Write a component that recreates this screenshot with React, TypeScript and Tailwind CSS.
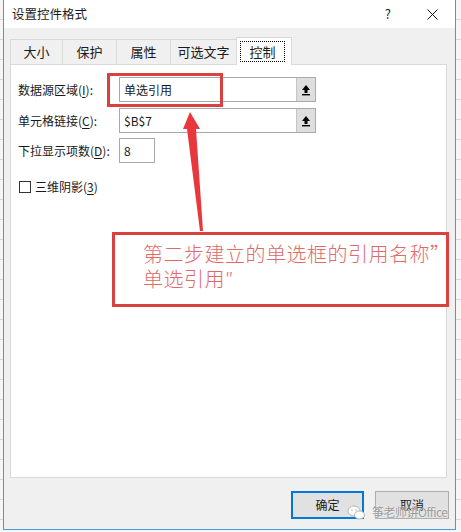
import React from "react";

const tabs = [
    { label: "大小", w: "w-[52px]" },
    { label: "保护", w: "w-[54px]" },
    { label: "属性", w: "w-[54px]" },
    { label: "可选文字", w: "w-[66px]" },
];

function PickerIcon() {
    return (
        <svg width="10" height="12" viewBox="0 0 10 12">
            <path d="M5 1 L1 6 H3.5 V9 H6.5 V6 H9 Z" fill="#000" />
            <rect x="1" y="10" width="8" height="1.4" fill="#000" />
        </svg>
    );
}

function RefInput({ value }: { value: string }) {
    return (
        <div className="flex w-[197px] h-[25px] border border-[#a9a9a9] bg-white">
            <div className="flex-1 flex items-center pl-[4px]">{value}</div>
            <div className="w-[19px] border-l border-[#c4c4c4] bg-[#dedede] flex items-center justify-center">
                <PickerIcon />
            </div>
        </div>
    );
}

function Label({ text, hot }: { text: string; hot: string }) {
    return (
        <span className="w-[101px] shrink-0">
            {text}(<span className="underline underline-offset-2">{hot}</span>):
        </span>
    );
}

export default function App() {
    return (
        <div className="relative w-[461px] h-[532px] overflow-hidden bg-[repeating-linear-gradient(to_bottom,#f6f6f6_0px,#f6f6f6_19px,#d8d8d8_19px,#d8d8d8_20px)] font-['Noto_Sans_CJK_SC',sans-serif] text-[12px] text-[#1a1a1a]">
            <div className="flex h-[532px]">
                <div className="w-[3px]" />
                {/* Dialog */}
                <div className="w-[453px] h-[530px] flex flex-col border-x border-b border-[#4a9ad6]">
                    {/* Title bar */}
                    <div className="h-[28px] bg-white flex items-center pl-[8px] shrink-0">
                        <span className="text-[12.5px]">设置控件格式</span>
                        <span className="ml-auto mr-[36px] text-[13px]">?</span>
                        <svg width="11" height="11" viewBox="0 0 11 11" className="mr-[17px]">
                            <path d="M0.5 0.5 L10.5 10.5 M10.5 0.5 L0.5 10.5" stroke="#111" strokeWidth="1" />
                        </svg>
                    </div>

                    <div className="flex-1 bg-[#f0f0f0] flex flex-col">
                        {/* Tabs */}
                        <div className="flex items-end pl-[6px] pt-[9px]">
                            {tabs.map((t) => (
                                <div
                                    key={t.label}
                                    className={`${t.w} h-[25px] border-l border-t border-[#d9d9d9] flex items-center justify-center text-[13px]`}
                                >
                                    {t.label}
                                </div>
                            ))}
                            <div className="relative z-10 -mb-px w-[56px] h-[28px] bg-white border-x border-t border-[#d9d9d9] pt-[3px] pl-[3px]">
                                <div className="w-[45px] h-[21px] border border-dotted border-black flex items-center justify-center text-[13px]">
                                    控制
                                </div>
                            </div>
                        </div>

                        {/* Panel */}
                        <div className="ml-[6px] w-[437px] h-[414px] bg-white border border-[#d9d9d9] pl-[7px] pt-[12px]">
                            <div className="flex items-center h-[25px]">
                                <Label text="数据源区域" hot="I" />
                                <RefInput value="单选引用" />
                            </div>
                            <div className="flex items-center h-[25px] mt-[6px]">
                                <Label text="单元格链接" hot="C" />
                                <RefInput value="$B$7" />
                            </div>
                            <div className="flex items-center h-[25px] mt-[5px]">
                                <Label text="下拉显示项数" hot="D" />
                                <div className="w-[36px] h-[25px] border border-[#a9a9a9] flex items-center pl-[4px]">8</div>
                            </div>
                            <div className="flex items-center mt-[15px] ml-[1px]">
                                <div className="w-[12px] h-[12px] border border-[#333] bg-white" />
                                <span className="ml-[4px]">
                                    三维阴影(<span className="underline underline-offset-2">3</span>)
                                </span>
                            </div>
                        </div>

                        {/* Buttons */}
                        <div className="flex justify-end gap-[11px] pr-[6px] mt-[13px]">
                            <button className="w-[73px] h-[28px] border-2 border-[#0078d7] bg-[#e1e1e1]">确定</button>
                            <button className="w-[74px] h-[28px] border border-[#adadad] bg-[#e1e1e1]">取消</button>
                        </div>
                    </div>
                </div>
            </div>

            {/* Annotation: highlight */}
            <div className="absolute left-[107px] top-[73px] w-[116px] h-[34px] border-[3px] border-[#d94141]" />

            {/* Annotation: arrow */}
            <svg className="absolute left-0 top-0" width="461" height="532">
                <polygon points="190,112 200,129 196,129 203,231 200,231 187,129 183,129" fill="#e8383d" />
            </svg>

            {/* Annotation: callout */}
            <div className="absolute left-[112px] top-[232px] w-[337px] h-[75px] border-[3px] border-[#d94141] bg-white pl-[28px] pt-[6px] text-[20px] leading-[25px] tracking-[0.5px] font-light text-[#e06a6a] whitespace-nowrap">
                <div>第二步建立的单选框的引用名称”</div>
                <div>单选引用″</div>
            </div>

            {/* Watermark */}
            <div className="absolute left-[347px] top-[503px] flex items-center gap-[7px]">
                <svg width="18" height="15" viewBox="0 0 18 15">
                    <ellipse cx="7" cy="6" rx="6" ry="5" fill="#fff" stroke="#b5b5b5" strokeWidth="1" />
                    <ellipse cx="12.5" cy="10" rx="5" ry="4" fill="#fff" stroke="#b5b5b5" strokeWidth="1" />
                    <circle cx="5" cy="5" r="0.8" fill="#b5b5b5" />
                    <circle cx="9" cy="5" r="0.8" fill="#b5b5b5" />
                </svg>
                <span className="text-[12px] tracking-[-0.5px] text-[#9a9a9a] [text-shadow:0_0_2px_#fff]">筝老师讲Office</span>
            </div>
        </div>
    );
}
